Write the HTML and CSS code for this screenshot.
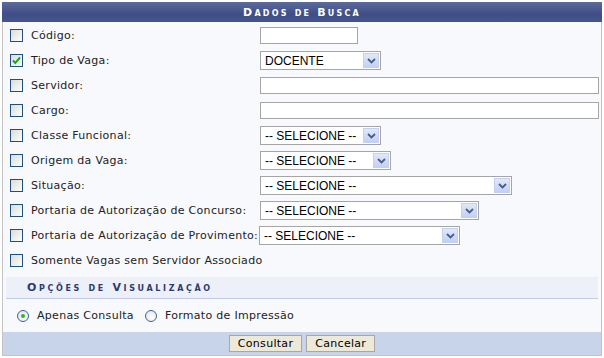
FILE: index.html
```html
<!DOCTYPE html>
<html lang="pt">
<head>
<meta charset="utf-8">
<title>Dados de Busca</title>
<link rel="stylesheet" href="styles.css">
</head>
<body>
<div class="panel">
  <div class="caption">Dados de Busca</div>
  <div class="form">
    <span class="cb"></span><span class="label">Código:</span>
    <div class="field"><span class="input w97"></span></div>

    <span class="cb"><svg width="11" height="11" viewBox="0 0 11 11"><path d="M2 5.5 L4.3 8 L9 2.5" fill="none" stroke="#22a322" stroke-width="2"/></svg></span><span class="label">Tipo de Vaga:</span>
    <div class="field"><span class="select w121"><span class="txt">DOCENTE</span><span class="arrow"><svg width="9" height="6" viewBox="0 0 9 6"><path d="M1 1 L4.5 4.5 L8 1" fill="none" stroke="#4a5d86" stroke-width="1.8"/></svg></span></span></div>

    <span class="cb"></span><span class="label">Servidor:</span>
    <div class="field"><span class="input wfull"></span></div>

    <span class="cb"></span><span class="label">Cargo:</span>
    <div class="field"><span class="input wfull"></span></div>

    <span class="cb"></span><span class="label">Classe Funcional:</span>
    <div class="field"><span class="select w121"><span class="txt">-- SELECIONE --</span><span class="arrow"><svg width="9" height="6" viewBox="0 0 9 6"><path d="M1 1 L4.5 4.5 L8 1" fill="none" stroke="#4a5d86" stroke-width="1.8"/></svg></span></span></div>

    <span class="cb"></span><span class="label">Origem da Vaga:</span>
    <div class="field"><span class="select w131"><span class="txt">-- SELECIONE --</span><span class="arrow"><svg width="9" height="6" viewBox="0 0 9 6"><path d="M1 1 L4.5 4.5 L8 1" fill="none" stroke="#4a5d86" stroke-width="1.8"/></svg></span></span></div>

    <span class="cb"></span><span class="label">Situação:</span>
    <div class="field"><span class="select w252"><span class="txt">-- SELECIONE --</span><span class="arrow"><svg width="9" height="6" viewBox="0 0 9 6"><path d="M1 1 L4.5 4.5 L8 1" fill="none" stroke="#4a5d86" stroke-width="1.8"/></svg></span></span></div>

    <span class="cb"></span><span class="label">Portaria de Autorização de Concurso:</span>
    <div class="field"><span class="select w219"><span class="txt">-- SELECIONE --</span><span class="arrow"><svg width="9" height="6" viewBox="0 0 9 6"><path d="M1 1 L4.5 4.5 L8 1" fill="none" stroke="#4a5d86" stroke-width="1.8"/></svg></span></span></div>

    <span class="cb"></span><span class="label">Portaria de Autorização de Provimento:</span>
    <div class="field"><span class="select w201 shift"><span class="txt">-- SELECIONE --</span><span class="arrow"><svg width="9" height="6" viewBox="0 0 9 6"><path d="M1 1 L4.5 4.5 L8 1" fill="none" stroke="#4a5d86" stroke-width="1.8"/></svg></span></span></div>

    <span class="cb"></span><span class="label span2">Somente Vagas sem Servidor Associado</span>
  </div>
  <div class="subcaption">Opções de Visualização</div>
  <div class="radios">
    <span class="radio on"></span><span class="rlabel">Apenas Consulta</span>
    <span class="radio"></span><span class="rlabel">Formato de Impressão</span>
  </div>
  <div class="footer">
    <button class="btn">Consultar</button>
    <button class="btn">Cancelar</button>
  </div>
</div>
</body>
</html>
```

FILE: styles.css
```css
html, body {
  margin: 0;
  padding: 0;
  background: #ffffff;
}
body {
  font-family: "DejaVu Sans", Verdana, sans-serif;
  font-size: 11px;
  letter-spacing: 0.3px;
  color: #222222;
}
.panel {
  margin: 2px 3px 0 2px;
  width: 598px;
  border: 1px solid #c4c4c4;
  border-top: none;
  background: #f8f9fc;
}
.caption {
  height: 20px;
  margin: 0 -1px;
  background: linear-gradient(#5c6a9c, #3f4e86 60%, #45558c);
  color: #ffffff;
  font-weight: bold;
  font-variant: small-caps;
  letter-spacing: 2.2px;
  font-size: 11px;
  line-height: 21px;
  text-align: center;
}
.form {
  display: grid;
  grid-template-columns: 28px 229px 1fr;
  grid-auto-rows: 25px;
  align-items: center;
  padding-top: 1px;
}
.cb {
  box-sizing: border-box;
  width: 13px;
  height: 13px;
  margin-left: 7px;
  border: 1px solid #1f4f7f;
  background: linear-gradient(135deg, #dcdcd6, #f6f6f4 80%, #ffffff);
  display: flex;
  align-items: center;
  justify-content: center;
}
.label {
  white-space: nowrap;
}
.span2 { grid-column: 2 / 4; }
.field {
  display: flex;
  align-items: center;
}
.input {
  box-sizing: border-box;
  height: 17px;
  background: #ffffff;
  border: 1px solid #a5a5a5;
}
.w97 { width: 98px; }
.wfull { width: 339px; }
.select {
  box-sizing: border-box;
  height: 19px;
  background: #ffffff;
  border: 1px solid #a5a5a5;
  display: flex;
  align-items: center;
  justify-content: space-between;
  padding: 0 1px 0 4px;
  font-family: "Liberation Sans", Arial, sans-serif;
  font-size: 12px;
  letter-spacing: 0;
  color: #000000;
}
.shift { margin-left: -1px; }
.w121 { width: 121px; }
.w131 { width: 131px; }
.w252 { width: 252px; }
.w219 { width: 219px; }
.w201 { width: 201px; }
.arrow {
  box-sizing: border-box;
  width: 16px;
  height: 15px;
  border: 1px solid #c3d0ee;
  background: linear-gradient(#e1e8fb, #c2d0f4);
  display: flex;
  align-items: center;
  justify-content: center;
}
.subcaption {
  margin: 4px 3px 0 3px;
  height: 21px;
  background: #edf0f8;
  border-bottom: 1px solid #c4cde6;
  color: #2b3b6e;
  font-weight: bold;
  font-variant: small-caps;
  letter-spacing: 2.65px;
  line-height: 22px;
  padding-left: 21px;
}
.radios {
  height: 33px;
  display: flex;
  align-items: center;
  padding-left: 14px;
}
.radio {
  box-sizing: border-box;
  width: 12px;
  height: 12px;
  border-radius: 50%;
  border: 1px solid #3f6396;
  background: radial-gradient(circle at 60% 60%, #ffffff, #dedfe4);
  display: inline-flex;
  align-items: center;
  justify-content: center;
  margin-right: 8px;
}
.radio.on::after {
  content: "";
  width: 4px;
  height: 4px;
  border-radius: 50%;
  background: #29b62e;
}
.rlabel { margin-right: 11px; }
.footer {
  height: 23px;
  background: #c8d4ea;
  display: flex;
  align-items: center;
  justify-content: center;
  gap: 4px;
}
.btn {
  height: 17px;
  padding: 0 8px;
  background: #ece9d8;
  border: 1px solid #a8a8a0;
  font-family: "DejaVu Sans", Verdana, sans-serif;
  font-size: 11px;
  letter-spacing: 0.3px;
  color: #000000;
  line-height: 14px;
}
```
